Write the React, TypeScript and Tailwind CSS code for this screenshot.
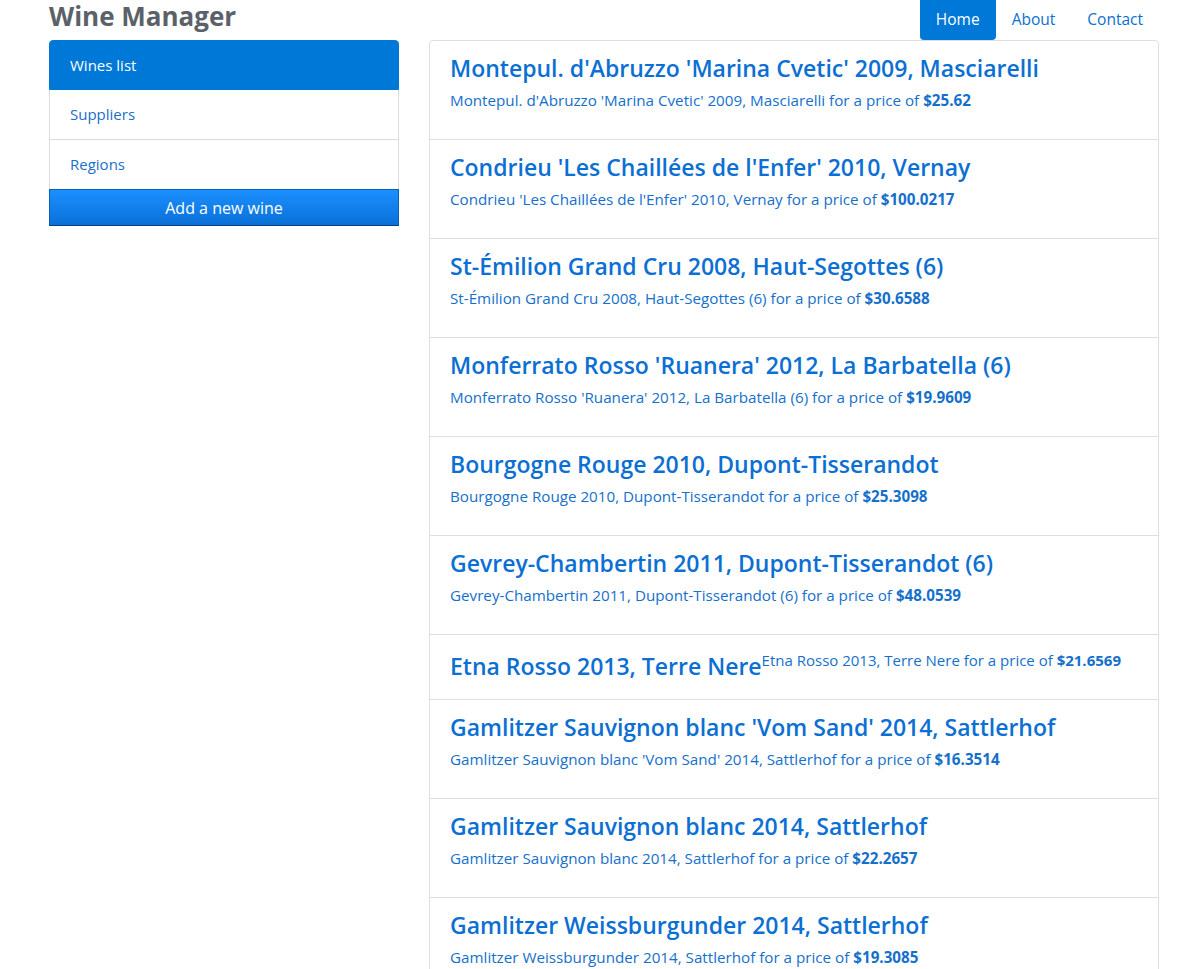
import React from "react";

const wines = [
  { name: "Montepul. d'Abruzzo 'Marina Cvetic' 2009, Masciarelli", price: "$25.62" },
  { name: "Condrieu 'Les Chaillées de l'Enfer' 2010, Vernay", price: "$100.0217" },
  { name: "St-Émilion Grand Cru 2008, Haut-Segottes (6)", price: "$30.6588" },
  { name: "Monferrato Rosso 'Ruanera' 2012, La Barbatella (6)", price: "$19.9609" },
  { name: "Bourgogne Rouge 2010, Dupont-Tisserandot", price: "$25.3098" },
  { name: "Gevrey-Chambertin 2011, Dupont-Tisserandot (6)", price: "$48.0539" },
  { name: "Etna Rosso 2013, Terre Nere", price: "$21.6569", inline: true },
  { name: "Gamlitzer Sauvignon blanc 'Vom Sand' 2014, Sattlerhof", price: "$16.3514" },
  { name: "Gamlitzer Sauvignon blanc 2014, Sattlerhof", price: "$22.2657" },
  { name: "Gamlitzer Weissburgunder 2014, Sattlerhof", price: "$19.3085" },
];

function WineItem({ wine, last }: { wine: (typeof wines)[number]; last: boolean }) {
  if (wine.inline) {
    return (
      <div className={`px-5 pt-[14px] h-[65px] ${last ? "" : "border-b border-[#dfdfdf]"}`}>
        <div className="flex items-start">
          <h4 className="text-[23px] leading-[34px] font-semibold text-[#0b6fd3]">{wine.name}</h4>
          <p className="text-[15px] leading-[22px] text-[#1570cc]">
            {wine.name} for a price of <b className="font-bold">{wine.price}</b>
          </p>
        </div>
      </div>
    );
  }
  return (
    <div className={`px-5 pt-[12px] h-[99px] ${last ? "" : "border-b border-[#dfdfdf]"}`}>
      <h4 className="text-[23px] leading-[30px] font-semibold text-[#0b6fd3] mb-[6px]">{wine.name}</h4>
      <p className="text-[15.2px] leading-[22px] text-[#1570cc]">
        {wine.name} for a price of <b className="font-bold">{wine.price}</b>
      </p>
    </div>
  );
}

export default function App() {
  return (
    <div className="min-h-screen bg-white" style={{ fontFamily: "'Open Sans', 'Noto Sans', sans-serif" }}>
      <div className="pl-[49px] pr-[25px]">
        <header className="flex items-start justify-between h-[40px]">
          <h1 className="text-[26px] leading-[34px] font-bold text-[#5b6168] -mt-[1px]">Wine Manager</h1>
          <nav className="flex text-[15.5px]">
            <a className="h-[40px] px-4 flex items-center bg-[#0078d7] text-white rounded-b-[4px]">Home</a>
            <a className="h-[40px] px-4 flex items-center text-[#0a6fd3]">About</a>
            <a className="h-[40px] px-4 flex items-center text-[#0a6fd3]">Contact</a>
          </nav>
        </header>

        <div className="flex gap-[30px] items-start">
          <aside className="w-[350px] shrink-0">
            <div className="flex flex-col text-[15px]">
              <a className="h-[50px] px-5 flex items-center bg-[#0078d7] text-white rounded-t-[4px] border border-[#0078d7]">
                Wines list
              </a>
              <a className="h-[50px] px-5 flex items-center text-[#1a6fc9] border-x border-b border-[#dcdcdc]">
                Suppliers
              </a>
              <a className="h-[49px] px-5 flex items-center text-[#1a6fc9] border-x border-[#dcdcdc]">
                Regions
              </a>
              <button className="h-[37px] w-full text-[16px] text-white bg-gradient-to-b from-[#1b90ff] to-[#0a70d8] border border-[#0a5fb8] border-b-[#06407f]">
                Add a new wine
              </button>
            </div>
          </aside>

          <main className="w-[730px] border border-[#dfdfdf] rounded-t-[4px]">
            {wines.map((w, i) => (
              <WineItem key={i} wine={w} last={i === wines.length - 1} />
            ))}
          </main>
        </div>
      </div>
    </div>
  );
}
